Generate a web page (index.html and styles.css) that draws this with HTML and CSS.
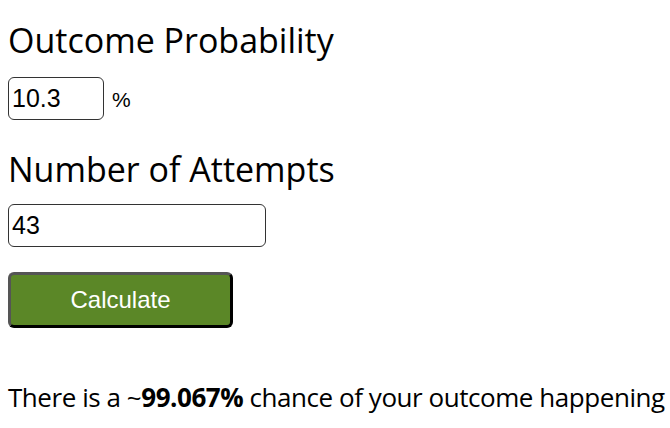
FILE: index.html
```html
<!DOCTYPE html>
<html>
<head>
<meta charset="utf-8">
<link rel="stylesheet" href="styles.css">
</head>
<body>
<main class="calc">
  <h2 class="label">Outcome Probability</h2>
  <div class="row">
    <input class="field field-small" type="text" value="10.3">
    <span class="unit">%</span>
  </div>
  <h2 class="label label-second">Number of Attempts</h2>
  <input class="field field-wide" type="text" value="43">
  <button class="btn" type="button">Calculate</button>
  <p class="result">There is a ~<b>99.067%</b> chance of your outcome happening</p>
</main>
</body>
</html>
```
FILE: styles.css
```css
html, body {
  margin: 0;
  padding: 0;
  background: #fff;
}
.calc {
  padding: 0 8px;
  display: flex;
  flex-direction: column;
  align-items: flex-start;
  font-family: "Open Sans", "Noto Sans", sans-serif;
  color: #000;
}
.label {
  margin: 20px 0 0;
  font-size: 34px;
  line-height: 40px;
  font-weight: 400;
  white-space: nowrap;
}
.label-second {
  margin-top: 29px;
}
.row {
  display: flex;
  align-items: center;
  gap: 8px;
  margin-top: 17px;
}
.field {
  box-sizing: border-box;
  height: 43px;
  margin: 0;
  padding: 0 3px;
  border: 1px solid #333;
  border-radius: 6px;
  font-family: "Liberation Sans", Arial, sans-serif;
  font-size: 25px;
  color: #000;
  background: #fff;
  outline: none;
}
.field-small {
  width: 96px;
}
.field-wide {
  width: 258px;
  margin-top: 15px;
}
.unit {
  font-family: "Liberation Sans", Arial, sans-serif;
  font-size: 21px;
  margin-top: 3px;
}
.btn {
  box-sizing: border-box;
  width: 225px;
  height: 56px;
  margin-top: 25px;
  background: #5b8727;
  color: #fff;
  border: 3px solid;
  border-color: #555 #000 #000 #555;
  border-radius: 6px;
  font-family: "Liberation Sans", Arial, sans-serif;
  font-size: 24px;
  cursor: pointer;
}
.result {
  margin: 53px 0 0;
  font-size: 26px;
  line-height: 32px;
  letter-spacing: -0.45px;
  white-space: nowrap;
}
.result b {
  font-weight: 700;
}
```
